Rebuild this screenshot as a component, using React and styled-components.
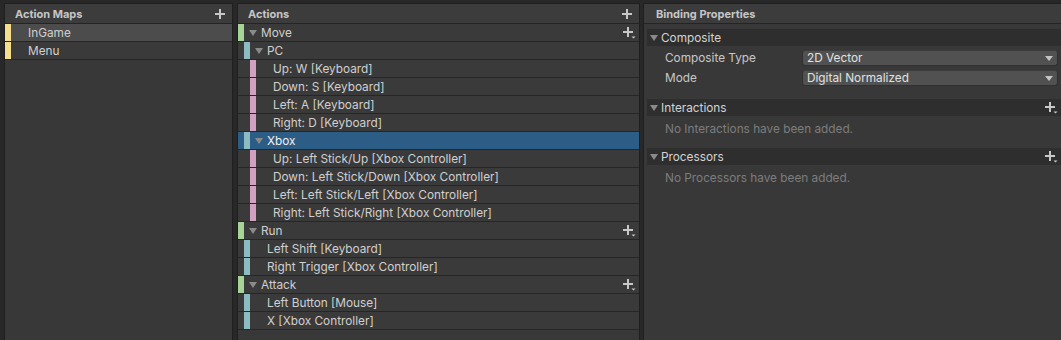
import React from 'react';
import styled, { createGlobalStyle } from 'styled-components';

const GlobalStyle = createGlobalStyle`
  html, body {
    margin: 0;
    padding: 0;
    background: #282828;
  }
  body {
    font-family: Inter, "Noto Sans", "Liberation Sans", sans-serif;
    color: #d0d0d0;
  }
  * {
    box-sizing: border-box;
  }
`;

const COLORS = {
  map: '#f5de8c',
  action: '#a6d497',
  binding: '#8cbcc1',
  part: '#d2a1c1',
};

const Window = styled.div`
  display: flex;
  width: 1061px;
  height: 340px;
  padding: 3px 0 0 4px;
  overflow: hidden;
`;

const Panel = styled.div`
  flex: ${(p) => (p.$width ? `0 0 ${p.$width}px` : '1 1 auto')};
  margin-left: ${(p) => p.$gap || 0}px;
  display: flex;
  flex-direction: column;
  background: #383838;
  border: 1px solid #1f1f1f;
  border-bottom: none;
  border-right: ${(p) => (p.$open ? 'none' : '1px solid #1f1f1f')};
  min-width: 0;
`;

const PanelHeader = styled.div`
  height: 20px;
  flex: 0 0 20px;
  display: flex;
  align-items: center;
  justify-content: space-between;
  padding: 0 7px 0 ${(p) => p.$pad || 10}px;
  background: #3c3c3c;
  border-bottom: 1px solid #242424;
  font-size: 11px;
  font-weight: 700;
  color: #c6c6c6;
`;

const Row = styled.div`
  height: 18px;
  display: flex;
  align-items: stretch;
  padding-left: ${(p) => p.$level * 6}px;
  background: ${(p) => (p.$selected ? '#2c5d87' : p.$active ? '#4c4c4c' : '#3a3a3a')};
  border-bottom: 1px solid #262626;
  font-size: 11.8px;
  color: ${(p) => (p.$selected ? '#f0f0f0' : '#d0d0d0')};
`;

const Stripe = styled.span`
  flex: 0 0 6px;
  background: ${(p) => p.$color};
`;

const ToggleSlot = styled.span`
  flex: 0 0 ${(p) => p.$w}px;
  display: flex;
  align-items: center;
  padding-left: 5px;
`;

const Triangle = styled.span`
  width: 0;
  height: 0;
  border-left: 4px solid transparent;
  border-right: 4px solid transparent;
  border-top: 6px solid #8a8a8a;
`;

const Label = styled.span`
  flex: 1 1 auto;
  display: flex;
  align-items: center;
  padding-top: 1px;
  white-space: nowrap;
`;

const RowTail = styled.span`
  display: flex;
  align-items: center;
  padding-right: 3px;
`;

const Body = styled.div`
  flex: 1 1 auto;
  display: flex;
  flex-direction: column;
  padding: ${(p) => p.$pad || '0'};
`;

const SectionBar = styled.div`
  height: 17px;
  flex: 0 0 17px;
  display: flex;
  align-items: center;
  background: #2e2e2e;
  font-size: 11.8px;
  color: #d4d4d4;
  padding-left: 3px;
  & > span:nth-child(2) {
    flex: 1 1 auto;
    margin-left: 3px;
    padding-top: 1px;
  }
`;

const SectionContent = styled.div`
  display: flex;
  flex-direction: column;
  padding: ${(p) => p.$pad};
`;

const PropRow = styled.div`
  height: 20px;
  display: flex;
  align-items: center;
  padding-left: 18px;
  font-size: 11.8px;
  color: #c8c8c8;
`;

const PropLabel = styled.span`
  flex: 0 0 137px;
`;

const Dropdown = styled.div`
  flex: 1 1 auto;
  height: 16px;
  margin-right: 3px;
  display: flex;
  align-items: center;
  justify-content: space-between;
  padding: 0 4px;
  background: #515151;
  border: 1px solid #303030;
  border-top-color: #3c3c3c;
  border-radius: 3px;
  color: #e2e2e2;
  font-size: 11.8px;
`;

const Message = styled.div`
  padding: 4px 0 10px 18px;
  line-height: 18px;
  font-size: 11.8px;
  color: #7d7d7d;
`;

const Plus = () => (
  <svg width="10" height="10" viewBox="0 0 10 10">
    <rect x="0" y="4" width="10" height="2" fill="#c8c8c8" />
    <rect x="4" y="0" width="2" height="10" fill="#c8c8c8" />
  </svg>
);

const PlusMenu = () => (
  <svg width="13" height="12" viewBox="0 0 13 12">
    <rect x="0" y="4" width="10" height="2" fill="#c8c8c8" />
    <rect x="4" y="0" width="2" height="10" fill="#c8c8c8" />
    <polygon points="8.5,9.5 12.5,9.5 10.5,11.5" fill="#c8c8c8" />
  </svg>
);

const Arrow = () => (
  <svg width="8" height="5" viewBox="0 0 8 5">
    <polygon points="0,0 8,0 4,5" fill="#c4c4c4" />
  </svg>
);

const maps = [
  { name: 'InGame', active: true },
  { name: 'Menu' },
];

const actions = [
  { label: 'Move', level: 0, color: COLORS.action, fold: true, add: true },
  { label: 'PC', level: 1, color: COLORS.binding, fold: true },
  { label: 'Up: W [Keyboard]', level: 2, color: COLORS.part },
  { label: 'Down: S [Keyboard]', level: 2, color: COLORS.part },
  { label: 'Left: A [Keyboard]', level: 2, color: COLORS.part },
  { label: 'Right: D [Keyboard]', level: 2, color: COLORS.part },
  { label: 'Xbox', level: 1, color: COLORS.binding, fold: true, selected: true },
  { label: 'Up: Left Stick/Up [Xbox Controller]', level: 2, color: COLORS.part },
  { label: 'Down: Left Stick/Down [Xbox Controller]', level: 2, color: COLORS.part },
  { label: 'Left: Left Stick/Left [Xbox Controller]', level: 2, color: COLORS.part },
  { label: 'Right: Left Stick/Right [Xbox Controller]', level: 2, color: COLORS.part },
  { label: 'Run', level: 0, color: COLORS.action, fold: true, add: true },
  { label: 'Left Shift [Keyboard]', level: 1, color: COLORS.binding },
  { label: 'Right Trigger [Xbox Controller]', level: 1, color: COLORS.binding },
  { label: 'Attack', level: 0, color: COLORS.action, fold: true, add: true },
  { label: 'Left Button [Mouse]', level: 1, color: COLORS.binding },
  { label: 'X [Xbox Controller]', level: 1, color: COLORS.binding },
];

export default function App() {
  return (
    <>
      <GlobalStyle />
      <Window>
        <Panel $width={229}>
          <PanelHeader>
            <span>Action Maps</span>
            <Plus />
          </PanelHeader>
          <Body>
            {maps.map((m) => (
              <Row key={m.name} $level={0} $active={m.active}>
                <Stripe $color={COLORS.map} />
                <ToggleSlot $w={17} />
                <Label>{m.name}</Label>
              </Row>
            ))}
          </Body>
        </Panel>

        <Panel $width={403} $gap={4}>
          <PanelHeader>
            <span>Actions</span>
            <Plus />
          </PanelHeader>
          <Body>
            {actions.map((a, index) => (
              <Row key={index} $level={a.level} $selected={a.selected}>
                <Stripe $color={a.color} />
                <ToggleSlot $w={17}>{a.fold && <Triangle />}</ToggleSlot>
                <Label>{a.label}</Label>
                {a.add && (
                  <RowTail>
                    <PlusMenu />
                  </RowTail>
                )}
              </Row>
            ))}
          </Body>
        </Panel>

        <Panel $gap={3} $open>
          <PanelHeader $pad={12}>
            <span>Binding Properties</span>
          </PanelHeader>
          <Body $pad="5px 0 0 3px">
            <SectionBar>
              <Triangle />
              <span>Composite</span>
            </SectionBar>
            <SectionContent $pad="2px 0 11px 0">
              <PropRow>
                <PropLabel>Composite Type</PropLabel>
                <Dropdown>
                  <span>2D Vector</span>
                  <Arrow />
                </Dropdown>
              </PropRow>
              <PropRow>
                <PropLabel>Mode</PropLabel>
                <Dropdown>
                  <span>Digital Normalized</span>
                  <Arrow />
                </Dropdown>
              </PropRow>
            </SectionContent>
            <SectionBar>
              <Triangle />
              <span>Interactions</span>
              <RowTail>
                <PlusMenu />
              </RowTail>
            </SectionBar>
            <Message>No Interactions have been added.</Message>
            <SectionBar>
              <Triangle />
              <span>Processors</span>
              <RowTail>
                <PlusMenu />
              </RowTail>
            </SectionBar>
            <Message>No Processors have been added.</Message>
          </Body>
        </Panel>
      </Window>
    </>
  );
}
